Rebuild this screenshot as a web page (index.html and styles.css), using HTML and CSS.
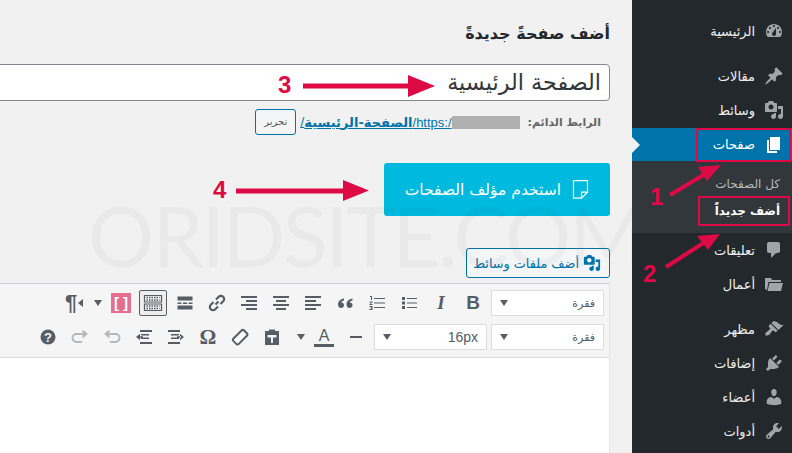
FILE: index.html
```html
<!DOCTYPE html>
<html lang="ar" dir="rtl">
<head>
    <meta charset="utf-8">
    <title>أضف صفحة جديدة</title>
    <link rel="stylesheet" href="styles.css">
</head>
<body>
    <aside class="sidebar">
        <ul class="menu">
            <li class="menu-item"><svg class="menu-icon" viewBox="0 0 20 20"><path fill-rule="evenodd" d="M3.76 16h12.48c1.1-1.37 1.76-3.11 1.76-5 0-4.42-3.58-8-8-8s-8 3.58-8 8c0 1.89.66 3.63 1.76 5zM10 4c.55 0 1 .45 1 1s-.45 1-1 1-1-.45-1-1 .45-1 1-1zM6 6c.55 0 1 .45 1 1s-.45 1-1 1-1-.45-1-1 .45-1 1-1zm8 0c.55 0 1 .45 1 1s-.45 1-1 1-1-.45-1-1 .45-1 1-1zm-5.37 5.55L12 7v6c0 1.1-.9 2-2 2s-2-.9-2-2c0-.57.24-1.08.63-1.45zM4 10c.55 0 1 .45 1 1s-.45 1-1 1-1-.45-1-1 .45-1 1-1zm12 0c.55 0 1 .45 1 1s-.45 1-1 1-1-.45-1-1 .45-1 1-1z"/></svg><span>الرئيسية</span></li>
            <li class="menu-item gap-top"><svg class="menu-icon" viewBox="0 0 20 20"><path d="M10.44 3.02l1.82-1.82 6.36 6.35-1.83 1.82c-1.05-.68-2.48-.57-3.41.36l-.75.75c-.92.93-1.04 2.35-.35 3.41l-1.83 1.82-2.41-2.41-2.8 2.79c-.42.42-3.38 2.71-3.8 2.29s1.86-3.39 2.28-3.81l2.79-2.79L4.1 9.36l1.83-1.82c1.05.69 2.48.57 3.4-.36l.75-.75c.93-.92 1.05-2.35.36-3.41z"/></svg><span>مقالات</span></li>
            <li class="menu-item"><svg class="menu-icon" viewBox="0 0 20 20"><path fill-rule="evenodd" d="M13 11V4c0-.55-.45-1-1-1h-1.67L9 1H5L3.67 3H2c-.55 0-1 .45-1 1v7c0 .55.45 1 1 1h10c.55 0 1-.45 1-1zM7 4.5c1.38 0 2.5 1.12 2.5 2.5S8.38 9.5 7 9.5 4.5 8.38 4.5 7 5.62 4.5 7 4.5zM14 6h5v10.5c0 1.38-1.12 2.5-2.5 2.5S14 17.88 14 16.5s1.12-2.5 2.5-2.5c.17 0 .34.02.5.05V9h-3V6zm-4 8.05V13h2v3.5c0 1.38-1.12 2.5-2.5 2.5S7 17.88 7 16.5 8.12 14 9.5 14c.17 0 .34.02.5.05z"/></svg><span>وسائط</span></li>
            <li class="menu-item current"><svg class="menu-icon" viewBox="0 0 20 20"><path d="M6 15V2h10v13H6zm-1 1h8v2H3V5h2v11z"/></svg><span>صفحات</span></li>
            <li class="submenu">
                <div class="submenu-item">كل الصفحات</div>
                <div class="submenu-item active">أضف جديداً</div>
            </li>
            <li class="menu-item"><svg class="menu-icon" viewBox="0 0 20 20"><path d="M5 2h9c1.1 0 2 .9 2 2v7c0 1.1-.9 2-2 2h-2l-5 5v-5H5c-1.1 0-2-.9-2-2V4c0-1.1.9-2 2-2z"/></svg><span>تعليقات</span></li>
            <li class="menu-item"><svg class="menu-icon" viewBox="0 0 20 20"><path d="M1 4h6l1 2h9v2H4.5L3 16 1 15zM5.5 9H19l-2 8H3.5z"/></svg><span>أعمال</span></li>
            <li class="menu-item gap-low"><svg class="menu-icon" viewBox="0 0 20 20"><path d="M14.48 11.06L7.41 3.99l1.5-1.5c.5-.56 2.3-.47 3.51.32 1.21.8 1.43 1.28 2.91 2.1 1.18.64 2.45 1.26 4.45.85zm-.71.71L6.7 4.7 4.93 6.47c-.39.39-.39 1.02 0 1.41l1.06 1.06c.39.39.39 1.03 0 1.42-.6.6-1.43 1.11-2.21 1.69-.35.26-.7.53-1.01.84C1.43 13.23.77 15.56 1.5 16.29c.73.73 3.06.07 4.4-1.27.31-.31.58-.66.84-1.01.58-.78 1.09-1.61 1.69-2.21.39-.39 1.02-.39 1.41 0l1.06 1.06c.39.39 1.02.39 1.41 0z"/></svg><span>مظهر</span></li>
            <li class="menu-item"><svg class="menu-icon" viewBox="0 0 20 20"><path d="M13.11 4.36L9.87 7.6 8 5.73l3.24-3.24c.35-.34 1.05-.2 1.56.32.52.51.66 1.21.31 1.55zm-8 1.77l.91-1.12 9.01 9.01-1.19.84c-.71.71-2.63 1.16-3.82 1.16H6.14L4.9 17.26c-.59.59-1.54.59-2.12 0-.59-.58-.59-1.53 0-2.12l1.24-1.24v-3.88c0-1.13.4-3.19 1.09-3.89zm7.26 3.97l3.24-3.24c.34-.35 1.04-.21 1.55.31.52.51.66 1.21.31 1.55l-3.24 3.25z"/></svg><span>إضافات</span></li>
            <li class="menu-item"><svg class="menu-icon" viewBox="0 0 20 20"><path d="M10 9.25c-2.27 0-2.73-3.44-2.73-3.44C7 4.02 7.82 2 9.97 2c2.16 0 2.98 2.02 2.71 3.81 0 0-.41 3.44-2.68 3.44zm0 2.57L12.72 10c2.39 0 4.52 2.33 4.52 4.53v2.49s-3.65 1.13-7.24 1.13c-3.65 0-7.24-1.13-7.24-1.13v-2.49c0-2.25 1.94-4.48 4.47-4.48z"/></svg><span>أعضاء</span></li>
            <li class="menu-item"><svg class="menu-icon" viewBox="0 0 20 20"><path fill-rule="evenodd" d="M16.68 9.77c-1.34 1.34-3.3 1.67-4.95.99l-5.41 6.52c-.99.99-2.59.99-3.58 0s-.99-2.59 0-3.57l6.52-5.42c-.68-1.65-.35-3.61.99-4.95 1.28-1.28 3.12-1.62 4.72-1.06l-2.89 2.89 2.82 2.82 2.86-2.87c.53 1.58.18 3.39-1.08 4.65zM3.81 16.21c.4.39 1.04.39 1.43 0 .4-.4.4-1.04 0-1.43-.39-.4-1.03-.4-1.43 0-.39.39-.39 1.03 0 1.43z"/></svg><span>أدوات</span></li>
        </ul>
    </aside>

    <main class="content">
        <h1 class="page-title">أضف صفحةً جديدةً</h1>
        <div class="title-input">الصفحة الرئيسية</div>

        <div class="permalink">
            <b class="permalink-label">الرابط الدائم:</b>
            <span class="redacted"></span>
            <span class="permalink-link url-part" dir="ltr">/https:/</span>
            <b class="permalink-link slug">الصفحة-الرئيسية</b>
            <span class="permalink-link">/</span>
            <span class="edit-slug">تحرير</span>
        </div>

        <div class="builder-row">
            <div class="builder-btn">
                <svg class="builder-icon" viewBox="0 0 17 19"><path d="M1.5.7h14v11.500l-6 6h-8zM15.500 12.200h-6v6" fill="none" stroke="#fff" stroke-width="1.200"/></svg>
                <span>استخدم مؤلف الصفحات</span>
            </div>
        </div>

        <div class="media-row">
            <div class="media-btn">
                <svg class="media-icon" viewBox="0 0 20 20"><path fill-rule="evenodd" d="M13 11V4c0-.55-.45-1-1-1h-1.67L9 1H5L3.67 3H2c-.55 0-1 .45-1 1v7c0 .55.45 1 1 1h10c.55 0 1-.45 1-1zM7 4.5c1.38 0 2.5 1.12 2.5 2.5S8.38 9.5 7 9.5 4.5 8.38 4.5 7 5.62 4.5 7 4.5zM14 6h5v10.5c0 1.38-1.12 2.5-2.5 2.5S14 17.88 14 16.5s1.12-2.5 2.5-2.5c.17 0 .34.02.5.05V9h-3V6zm-4 8.05V13h2v3.5c0 1.38-1.12 2.5-2.5 2.5S7 17.88 7 16.5 8.12 14 9.5 14c.17 0 .34.02.5.05z"/></svg>
                <span>أضف ملفات وسائط</span>
            </div>
        </div>

        <section class="editor">
            <div class="toolbar">
                <div class="tool-row">
                    <div class="select"><span>فقرة</span><i class="caret"></i></div>
                    <div class="tool text-tool bold">B</div>
                    <div class="tool text-tool italic">I</div>
                    <div class="tool"><svg viewBox="0 0 20 20"><path d="M3 4h3v3H3zM3 8.500h3v3H3zM3 13h3v3H3zM8 5h10v1H8zM8 9.500h10v1H8zM8 14h10v1H8z"/></svg></div>
                    <div class="tool"><svg viewBox="0 0 20 20"><path d="M7 5h11v1H7zM7 9.500h11v1H7zM7 14h11v1H7zM3 3h2v4H4V4H3zM2.500 8.500h3v1l-2 1.500h2v1h-3v-1l2-1.500h-2zM2.500 13h3v4h-3v-1h2v-.5h-1v-1h1V14h-2z"/></svg></div>
                    <div class="tool"><svg viewBox="0 0 20 20"><path d="M9 5.500C5.500 6 3 8 3 11.500 3 14 4.500 15 6 15s3-1 3-2.800C9 10.500 8 9.500 6.300 9.500 6.500 8.500 7.500 7.800 9 7.500zM17.500 5.500C14 6 11.500 8 11.500 11.500c0 2.500 1.500 3.500 3 3.500s3-1 3-2.800c0-1.700-1-2.700-2.700-2.700.2-1 1.200-1.700 2.700-2z"/></svg></div>
                    <div class="tool"><svg viewBox="0 0 20 20"><path d="M2 3h16v2H2zM2 7h11v2H2zM2 11h16v2H2zM2 15h11v2H2z"/></svg></div>
                    <div class="tool"><svg viewBox="0 0 20 20"><path d="M2 3h16v2H2zM5 7h10v2H5zM2 11h16v2H2zM5 15h10v2H5z"/></svg></div>
                    <div class="tool"><svg viewBox="0 0 20 20"><path d="M2 3h16v2H2zM7 7h11v2H7zM2 11h16v2H2zM7 15h11v2H7z"/></svg></div>
                    <div class="tool"><svg viewBox="0 0 20 20"><path d="M8.500 11.500l3-3M6.500 9L3.800 11.700a3 3 0 0 0 4.500 4.500L11 13.500M9 6.500l2.700-2.700a3 3 0 0 1 4.500 4.500L13.500 11" fill="none" stroke="#555d66" stroke-width="2.200"/></svg></div>
                    <div class="tool"><svg viewBox="0 0 20 20"><path d="M2.500 3.500h15v4h-15zM2.500 12.500h15v4h-15zM2.500 9.500h4v1.500h-4zM8 9.500h4v1.500H8zM13.500 9.500h4v1.500h-4z"/></svg></div>
                    <div class="tool pressed"><svg viewBox="0 0 20 20"><path fill="none" stroke="#555d66" stroke-width="1.200" d="M1.500 2.500h17v6.500h-17zM1.500 11h17v6.500h-17z"/><path fill="none" stroke="#555d66" stroke-width="1.500" stroke-dasharray="1.500 1" d="M3.500 4.500h13M3.500 7h13M3.500 13h13M3.500 15.500h13"/></svg></div>
                    <div class="tool shortcode"><span>[ ]</span></div>
                    <i class="caret tool-caret"></i>
                    <div class="tool pilcrow"><span class="pilcrow-mark">¶</span><i class="pilcrow-dir"></i></div>
                </div>
                <div class="tool-row">
                    <div class="select"><span>فقرة</span><i class="caret"></i></div>
                    <div class="select"><span class="size">16px</span><i class="caret"></i></div>
                    <div class="tool"><svg viewBox="0 0 20 20"><path d="M4 9h12v2H4z"/></svg></div>
                    <div class="tool colour-tool"><span>A</span></div>
                    <i class="caret split-caret"></i>
                    <div class="tool"><svg viewBox="0 0 20 20"><path fill-rule="evenodd" d="M3 4h4V2.500h6V4h4v14H3zM5.500 8v2.500h3.500V16h2v-5.500h3.500V8z"/></svg></div>
                    <div class="tool"><svg viewBox="0 0 20 20"><rect class="eraser" x="2.500" y="6.500" width="15" height="7.500" rx="1.800" transform="rotate(-45 10 10)"/></svg></div>
                    <div class="tool text-tool omega">Ω</div>
                    <div class="tool"><svg viewBox="0 0 20 20"><path d="M2 3h12v2H2zM5 7h8v1.500H5zM5 10.500h8V12H5zM2 15h12v2H2zM18 10l-4-3.200v6.400zM11 9.200h4v1.500h-4z"/></svg></div>
                    <div class="tool"><svg viewBox="0 0 20 20"><path d="M6 3h12v2H6zM7 7h8v1.500H7zM7 10.500h8V12H7zM6 15h12v2H6zM2 10l4-3.200v6.400zM5 9.200h4v1.500H5z"/></svg></div>
                    <div class="tool"><svg viewBox="0 0 20 20"><path fill="none" stroke="#b4b9be" stroke-width="2" d="M6 7h7.500a3.500 3.500 0 0 1 0 8H8"/><path fill="#b4b9be" d="M7.500 2.500v9L2 7z"/></svg></div>
                    <div class="tool"><svg viewBox="0 0 20 20"><path fill="none" stroke="#b4b9be" stroke-width="2" d="M14 7H6.500a3.500 3.500 0 0 0 0 8H12"/><path fill="#b4b9be" d="M12.500 2.500v9L18 7z"/></svg></div>
                    <div class="tool"><svg viewBox="0 0 20 20"><circle cx="10" cy="10" r="7.500"/><text class="help-mark" x="10" y="14.500" text-anchor="middle">?</text></svg></div>
                </div>
            </div>
            <div class="editor-body"></div>
        </section>

        <div class="watermark" dir="ltr">ORIDSITE.COM</div>
    </main>

    <!-- annotations drawn on top of the screenshot -->
    <svg class="notes" viewBox="0 0 792 453">
        <g fill="none" stroke="#dd0a45" stroke-width="2">
            <rect x="697" y="129" width="93" height="32"/>
            <rect x="699" y="197" width="90" height="28"/>
        </g>
        <g fill="none" stroke="#dd0a45" stroke-width="4">
            <path d="M670 195L705 174M666 267L705 242"/>
        </g>
        <g fill="none" stroke="#dd0a45" stroke-width="5">
            <path d="M303 86H410M236 191H345"/>
        </g>
        <g fill="#dd0a45">
            <path d="M721 165L698 167L707 181zM720 234L697 236L708 250zM435 86L408 75V97zM369 190.500L343 180V201z"/>
        </g>
        <g class="note-num" fill="#dd0a45">
            <text x="650" y="205">1</text>
            <text x="643" y="282">2</text>
            <text x="278" y="93">3</text>
            <text x="213" y="198">4</text>
        </g>
    </svg>
</body>
</html>
```

FILE: styles.css
```css
html, body {
    height: 100%;
}
body {
    margin: 0;
    display: flex;
    position: relative;
    overflow: hidden;
    background: #f1f1f1;
    color: #23282d;
    font-family: "DejaVu Sans", "Noto Sans", sans-serif;
    font-size: 13px;
}

/* sidebar */
.sidebar {
    width: 160px;
    flex: none;
    background: #23282d;
    color: #eee;
}
.menu {
    list-style: none;
    margin: 0;
    padding: 14px 0 0;
}
.menu-item {
    height: 34px;
    display: flex;
    align-items: center;
    gap: 9px;
    padding-right: 8px;
    font-size: 13px;
}
.menu-icon {
    width: 20px;
    height: 20px;
    fill: #a0a5aa;
    flex: none;
}
.gap-top {
    margin-top: 11px;
}
.gap-low {
    margin-top: 11px;
}
.current {
    height: 33px;
    margin-top: 1px;
    background: #0073aa;
    color: #fff;
    position: relative;
}
.current .menu-icon {
    fill: #fff;
}
.current::after {
    content: "";
    position: absolute;
    left: 0;
    top: 9px;
    border: 8px solid transparent;
    border-left-color: #f1f1f1;
}
.submenu {
    height: 72px;
    box-sizing: border-box;
    padding: 13px 12px 0 0;
    background: #32373c;
    font-size: 12px;
    color: #b4b9be;
}
.submenu-item {
    height: 27px;
    line-height: 20px;
}
.submenu-item.active {
    color: #fff;
    font-weight: bold;
}

/* main column */
.content {
    flex: 1;
    min-width: 0;
    position: relative;
    overflow: hidden;
    display: flex;
    flex-direction: column;
    padding-right: 22px;
}
.page-title {
    margin: 22px 0 0;
    height: 42px;
    font-size: 16px;
    line-height: 24px;
}
.title-input {
    height: 37px;
    margin-left: -10px;
    box-sizing: border-box;
    border: 1px solid #7e8993;
    border-radius: 4px;
    background: #fff;
    padding-right: 8px;
    font-size: 22.300px;
    line-height: 35px;
    color: #32373c;
}
.permalink {
    height: 26px;
    margin-top: 8px;
    display: flex;
    align-items: center;
    font-size: 12px;
}
.permalink-label {
    color: #666;
    font-size: 11px;
    margin: 0 9px 0 8px;
}
.redacted {
    width: 68px;
    height: 13px;
    background: #b0b0b0;
}
.permalink-link {
    color: #0073aa;
    text-decoration: underline;
}
.url-part {
    font-family: "Liberation Sans", sans-serif;
    font-size: 13px;
}
.slug {
    font-size: 13px;
}
.edit-slug {
    margin-right: 4px;
    width: 41px;
    height: 26px;
    box-sizing: border-box;
    border: 1px solid #0073aa;
    border-radius: 3px;
    background: #f3f5f6;
    text-align: center;
    line-height: 24px;
    font-size: 10px;
    color: #555;
}
.builder-row {
    margin-top: 28px;
    display: flex;
}
.builder-btn {
    width: 226px;
    height: 53px;
    box-sizing: border-box;
    padding-right: 21px;
    border-radius: 3px;
    background: #00b9de;
    color: #fff;
    display: flex;
    align-items: center;
    gap: 11px;
    font-size: 15.500px;
}
.builder-icon {
    width: 17px;
    height: 19px;
}
.media-row {
    margin-top: 32px;
    display: flex;
}
.media-btn {
    width: 144px;
    height: 30px;
    box-sizing: border-box;
    border: 1px solid #0073aa;
    border-radius: 3px;
    background: #f3f5f6;
    color: #0073aa;
    display: flex;
    align-items: center;
    padding-right: 8px;
    gap: 4px;
    font-size: 12.800px;
}
.media-icon {
    width: 18px;
    height: 18px;
    fill: #0073aa;
}

/* editor */
.editor {
    margin-top: 5px;
    flex: 1;
    display: flex;
    flex-direction: column;
    border-top: 1px solid #ccd0d4;
    border-right: 1px solid #e2e4e7;
    margin-left: -2px;
}
.toolbar {
    height: 74px;
    box-sizing: border-box;
    padding: 6px 5px 0 0;
    background: #f5f5f5;
    border-bottom: 1px solid #ddd;
}
.tool-row {
    height: 26px;
    margin-bottom: 8px;
    display: flex;
    align-items: center;
}
.select {
    width: 113px;
    height: 26px;
    box-sizing: border-box;
    border: 1px solid #ddd;
    background: #fff;
    margin-left: 4px;
    padding: 0 8px;
    display: flex;
    justify-content: space-between;
    align-items: center;
    font-size: 11px;
    color: #555d66;
}
.size {
    font-family: "Liberation Sans", sans-serif;
    font-size: 14px;
}
.caret {
    width: 0;
    height: 0;
    border: 4px solid transparent;
    border-top: 6px solid #555d66;
    border-bottom: 0;
}
.tool {
    width: 32px;
    height: 26px;
    flex: none;
    box-sizing: border-box;
    display: flex;
    align-items: center;
    justify-content: center;
}
.select + .tool {
    margin-right: -2px;
}
.tool svg {
    width: 20px;
    height: 20px;
    fill: #555d66;
}
.text-tool {
    font-family: "Liberation Sans", sans-serif;
    font-size: 19px;
    color: #555d66;
}
.bold {
    font-weight: bold;
}
.italic {
    font-family: "Liberation Serif", serif;
    font-style: italic;
    font-weight: bold;
}
.omega {
    font-family: "Liberation Serif", serif;
    font-size: 21px;
    font-weight: bold;
}
.eraser {
    fill: #fff;
    stroke: #555d66;
    stroke-width: 2;
}
.pressed {
    width: 28px;
    margin: 0 2px;
    border: 1px solid #555d66;
    border-radius: 2px;
    background: #eee;
}
.shortcode span {
    width: 20px;
    height: 20px;
    background: #e56d8e;
    color: #fff;
    font-family: "Liberation Sans", sans-serif;
    font-weight: bold;
    font-size: 15px;
    line-height: 19px;
    text-align: center;
}
.tool-caret {
    margin: 0 3px 0 4px;
}
.split-caret {
    margin: 0 3px 0 9px;
}
.pilcrow {
    direction: ltr;
    color: #555d66;
    gap: 1px;
}
.pilcrow-mark {
    font-family: "Liberation Sans", sans-serif;
    font-weight: bold;
    font-size: 22px;
}
.pilcrow-dir {
    border: 4px solid transparent;
    border-right: 5px solid #555d66;
    border-left: 0;
}
.colour-tool span {
    font-family: "Liberation Sans", sans-serif;
    font-size: 16px;
    line-height: 15px;
    padding: 0 0 1px;
    color: #555d66;
    border-bottom: 3px solid #555d66;
    width: 20px;
    text-align: center;
}
.help-mark {
    fill: #f5f5f5;
    font-family: "Liberation Sans", sans-serif;
    font-weight: bold;
    font-size: 13px;
}
.editor-body {
    flex: 1;
    background: #fff;
}

/* overlays */
.watermark {
    position: absolute;
    left: 88px;
    top: 194px;
    font-family: "Lato", sans-serif;
    font-size: 83px;
    line-height: 83px;
    letter-spacing: -2.500px;
    color: rgba(0, 0, 0, 0.03);
    white-space: nowrap;
    pointer-events: none;
}
.notes {
    position: absolute;
    left: 0;
    top: 0;
    width: 792px;
    height: 453px;
    direction: ltr;
    pointer-events: none;
}
.note-num {
    font-family: "Liberation Sans", sans-serif;
    font-weight: bold;
    font-size: 24px;
}
```
